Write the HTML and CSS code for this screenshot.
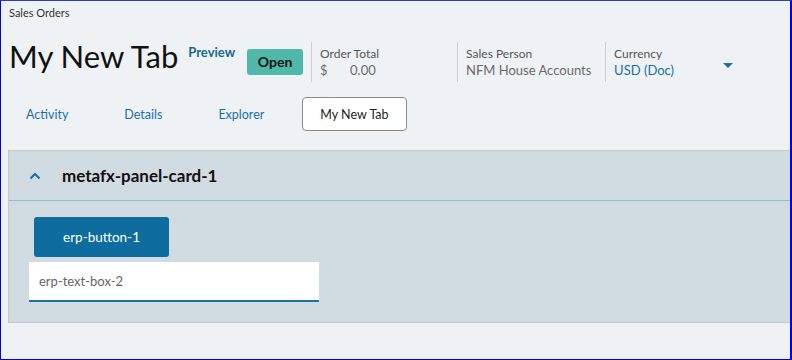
FILE: index.html
```html
<!DOCTYPE html>
<html lang="en">
<head>
    <meta charset="UTF-8">
    <meta name="viewport" content="width=device-width, initial-scale=1.0">
    <title>Sales Orders</title>
    <link rel="stylesheet" href="styles.css">
</head>
<body>
    <div class="frame">
        <div class="crumb">Sales Orders</div>

        <div class="header">
            <h1 class="title">My New Tab</h1>
            <span class="preview">Preview</span>
            <span class="badge">Open</span>

            <div class="field">
                <span class="label">Order Total</span>
                <span class="value"><span class="cur">$</span>0.00</span>
            </div>
            <div class="field">
                <span class="label">Sales Person</span>
                <span class="value">NFM House Accounts</span>
            </div>
            <div class="field field-select">
                <span class="label">Currency</span>
                <span class="value link">USD (Doc)</span>
                <svg class="caret" width="10" height="6" viewBox="0 0 10 6">
                    <path d="M0 0h10L5 5z" fill="#1a6fa8"/>
                </svg>
            </div>
        </div>

        <div class="tabs">
            <span class="tab">Activity</span>
            <span class="tab">Details</span>
            <span class="tab">Explorer</span>
            <span class="tab active">My New Tab</span>
        </div>

        <div class="panel">
            <div class="panel-head">
                <svg class="chevron" width="12" height="8" viewBox="0 0 12 8">
                    <path d="M1.5 6.5L6 2l4.5 4.5" fill="none" stroke="#1a6fa8" stroke-width="2"/>
                </svg>
                <span class="panel-title">metafx-panel-card-1</span>
            </div>
            <div class="panel-body">
                <button class="erp-button">erp-button-1</button>
                <input class="erp-input" type="text" placeholder="erp-text-box-2">
            </div>
        </div>
    </div>
</body>
</html>
```

FILE: styles.css
```css
* {
    padding: 0;
    margin: 0;
    box-sizing: border-box;
    font-family: Lato, "Open Sans", sans-serif;
}
body {
    background: #eff2f5;
}
.frame {
    width: 792px;
    height: 360px;
    overflow: hidden;
    background: #eff2f5;
    border-left: 1px solid #0000f0;
    border-right: 2px solid #0000f0;
    border-bottom: 1px solid #0000f0;
    border-top: 1px solid #2b3fc8;
}
.crumb {
    height: 31px;
    padding: 5px 0 0 8px;
    font-size: 11px;
    color: #333;
}
.header {
    display: flex;
    align-items: center;
    height: 60px;
    padding-left: 8px;
}
.title {
    font-size: 31px;
    font-weight: 400;
    color: #111;
    line-height: 1;
    padding-bottom: 11px;
}
.preview {
    align-self: flex-start;
    margin: 12px 0 0 10px;
    font-size: 13px;
    font-weight: 700;
    color: #17698a;
}
.badge {
    margin-left: 12px;
    width: 56px;
    height: 26px;
    line-height: 26px;
    text-align: center;
    background: #4fb8a8;
    border-radius: 3px;
    font-size: 14px;
    font-weight: 700;
    color: #111;
}
.field {
    display: flex;
    flex-direction: column;
    justify-content: center;
    height: 40px;
    margin-left: 8px;
    padding-left: 8px;
    border-left: 1px solid #c9ccd0;
    width: 138px;
}
.field-select {
    position: relative;
    margin-left: 10px;
    width: 134px;
}
.label {
    font-size: 12px;
    color: #555;
}
.value {
    margin-top: 1px;
    font-size: 13px;
    color: #6a6a6a;
}
.cur {
    display: inline-block;
    width: 30px;
}
.link {
    color: #1a6fa8;
}
.caret {
    position: absolute;
    right: 6px;
    top: 21px;
}
.tabs {
    display: flex;
    gap: 20px;
    height: 34px;
    margin-top: 5px;
    padding-left: 7px;
}
.tab {
    display: flex;
    align-items: center;
    padding: 0 17px;
    border: 1px solid transparent;
    border-radius: 4px;
    font-size: 12.5px;
    color: #1a6fa8;
}
.tab.active {
    background: #fff;
    border-color: #8a8a8a;
    color: #222;
}
.panel {
    margin: 19px -10px 0 7px;
    background: #d0dce1;
    border: 1px solid #c6c9cc;
}
.panel-head {
    display: flex;
    align-items: center;
    height: 50px;
    border-bottom: 1px solid #8fbfce;
    padding-left: 20px;
}
.chevron {
    margin-right: 21px;
}
.panel-title {
    font-size: 17px;
    font-weight: 700;
    color: #111;
}
.panel-body {
    display: flex;
    flex-direction: column;
    align-items: flex-start;
    gap: 5px;
    padding: 16px 20px 20px;
}
.erp-button {
    margin-left: 5px;
    width: 135px;
    height: 40px;
    border: none;
    border-radius: 3px;
    background: #0e6c9f;
    color: #fff;
    font-size: 13.5px;
}
.erp-input {
    width: 290px;
    height: 40px;
    padding: 0 10px;
    border: none;
    border-bottom: 2px solid #1a6fa8;
    background: #fff;
    font-size: 13px;
    color: #333;
    outline: none;
}
.erp-input::placeholder {
    color: #666;
}
```
